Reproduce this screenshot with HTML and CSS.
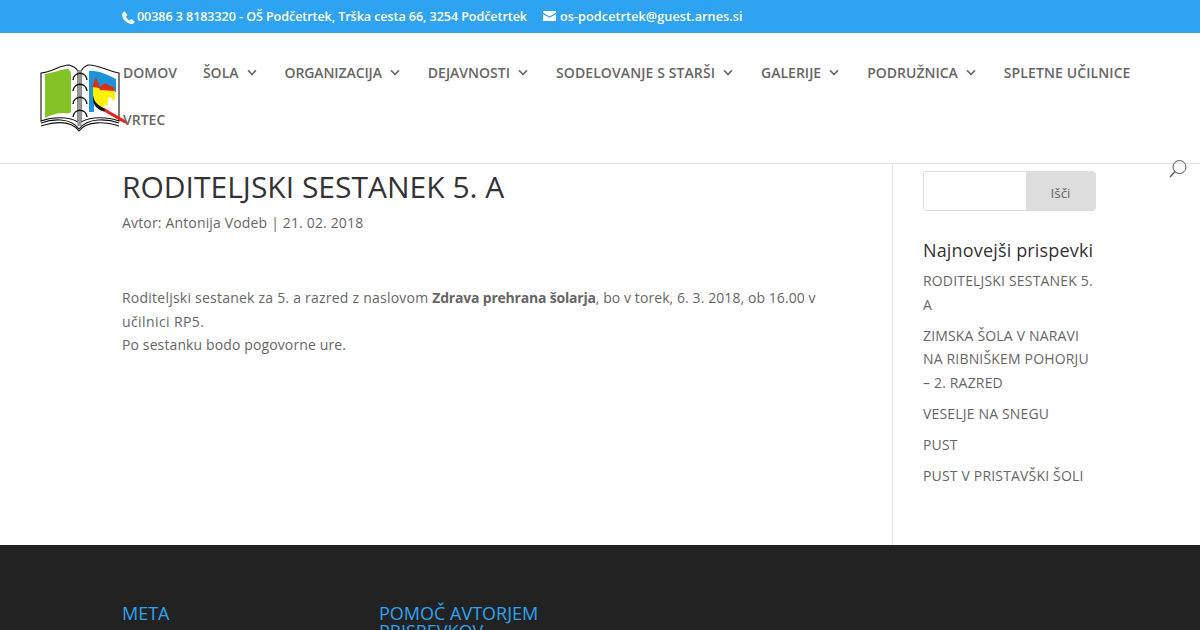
FILE: index.html
```html
<!DOCTYPE html>
<html lang="sl">
<head>
<meta charset="utf-8">
<title>Roditeljski sestanek 5. A</title>
<link rel="stylesheet" href="styles.css">
</head>
<body>
<div class="topbar">
  <div class="topbar-in">
    <span class="contact phone"><svg class="ico-phone" viewBox="0 0 13 13"><path d="M3 .8 5 3.500c.3.400.2.900-.1 1.200l-1 1c.7 1.500 2.200 3 3.700 3.700l1-1c.3-.3.800-.4 1.200-.1l2.500 1.900c.4.300.4.700.1 1-.8 1-1.700 2-2.900 1.800C5 12.700.4 8 .1 4.200 0 3 1 1.600 1.900.8c.4-.3.800-.3 1.100 0z" fill="#fff"/></svg>00386 3 8183320 - OŠ Podčetrtek, Trška cesta 66, 3254 Podčetrtek</span>
    <span class="contact mail"><svg class="ico-mail" viewBox="0 0 13 10"><path d="M0 0h13v1.800L6.500 5.400 0 1.800z" fill="#fff"/><path d="M0 3.200 6.500 6.800 13 3.200V10H0z" fill="#fff"/></svg>os-podcetrtek@guest.arnes.si</span>
  </div>
</div>
<header class="header">
  <svg class="logo" viewBox="0 0 90 70">
    <path d="M1 9 C12 8 20 1 29 1 C33 2 36 4 38 7 L38 58 C28 52 12 53 1 57 Z" fill="#fff" stroke="#111" stroke-width="1.100"/>
    <path d="M79 9 C70 8 56 0 48 1 C45 2 43 4 41 7 L41 58 C52 52 68 53 79 57 Z" fill="#fff" stroke="#111" stroke-width="1.100"/>
    <path d="M5 10 C13 9 21 5 28 5 C30 6 31 8 31 11 L31 48 C30 49 28 50 24 49 C17 49 10 51 5 54 Z" fill="#84c225"/>
    <path d="M49 7 C57 6 68 11 76 15 L76 28 L54 28 L54 48 L49 48 Z" fill="#1d94d9"/>
    <path d="M53 23 L60 23 L60 25 L75 26 L75 36 L72 36 L71 33 L68 34 L68 41 L64 41 L62 46 L57 40 L53 34 Z" fill="#fff200"/>
    <path d="M52 23 L56 13 L60 23 L62 21 L66 19 L70 22 L74 23 L75 27 L60 26 L59 24 Z" fill="#d9301c"/>
    <path d="M53 31 C54 38 58 42 66 45 L67 48 C58 47 52 42 53 31 Z" fill="#111"/>
    <path d="M64 44 L85 56 L89 60 L84 59 L65 48 Z" fill="#e0251b"/>
    <path d="M39.500 6 V62" stroke="#999" stroke-width="4"/>
    <g fill="none" stroke="#111" stroke-width="1.400"><path d="M33 16 C34 7 46 7 47 16"/><path d="M33 27 C34 18 46 18 47 27"/><path d="M33 40 C34 31 46 31 47 40"/><path d="M33 53 C34 44 46 44 47 53"/></g>
    <g fill="none" stroke="#111" stroke-width="1.100"><path d="M1 59 C12 55 30 53 39 65 C48 53 68 55 79 59"/><path d="M1 62 C14 58 31 56 39 67 C47 56 66 58 79 62"/></g>
  </svg>
  <nav class="nav">
    <ul class="menu">
      <li><a>DOMOV</a></li>
      <li class="sub"><a>ŠOLA</a></li>
      <li class="sub"><a class="tight">ORGANIZACIJA</a></li>
      <li class="sub"><a>DEJAVNOSTI</a></li>
      <li class="sub"><a class="wide">SODELOVANJE S STARŠI</a></li>
      <li class="sub"><a>GALERIJE</a></li>
      <li class="sub"><a>PODRUŽNICA</a></li>
      <li><a class="wide">SPLETNE UČILNICE</a></li>
      <li><a>VRTEC</a></li>
    </ul>
  </nav>
  <svg class="search-ico" viewBox="0 0 18 18"><circle cx="10.500" cy="7" r="6.500" fill="none" stroke="#555" stroke-width="1"/><path d="M6 11.500 1 17" stroke="#555" stroke-width="1.300" fill="none"/></svg>
</header>
<div class="main">
  <div class="wrap">
    <article class="post">
      <h1>RODITELJSKI SESTANEK 5. A</h1>
      <p class="meta">Avtor: Antonija Vodeb | 21. 02. 2018</p>
      <p class="body"><span class="lead">Roditeljski sestanek za 5. a razred z naslovom </span><strong>Zdrava prehrana šolarja</strong><span class="date">, bo v torek, 6. 3. 2018, ob 16.00 v </span><span class="room">učilnici RP5.</span><br>Po sestanku bodo pogovorne ure.</p>
    </article>
    <aside class="side">
      <form class="search"><span class="search-input"></span><span class="search-btn">Išči</span></form>
      <h4>Najnovejši prispevki</h4>
      <ul class="recent">
        <li>RODITELJSKI SESTANEK 5. A</li>
        <li>ZIMSKA ŠOLA V NARAVI NA RIBNIŠKEM POHORJU – 2. RAZRED</li>
        <li>VESELJE NA SNEGU</li>
        <li>PUST</li>
        <li>PUST V PRISTAVŠKI ŠOLI</li>
      </ul>
    </aside>
  </div>
</div>
<footer class="footer">
  <div class="foot-in">
    <h4 class="foot-col first">META</h4>
    <h4 class="foot-col">POMOČ AVTORJEM PRISPEVKOV</h4>
  </div>
</footer>
</body>
</html>
```
FILE: styles.css
```css
* { box-sizing: border-box; }
html, body { margin: 0; padding: 0; }
body { width: 1200px; height: 630px; overflow: hidden; background: #fff; font-family: "Open Sans", sans-serif; font-size: 14px; color: #666; }
.topbar { height: 33px; background: #2ea3f2; color: #fff; font-size: 12.600px; font-weight: 600; }
.topbar-in { display: flex; padding: 8px 0 0 122px; line-height: 18px; }
.contact { display: flex; align-items: center; white-space: nowrap; }
.phone { margin-right: 16px; letter-spacing: -.09px; }
.mail { letter-spacing: .1px; }
.ico-phone { width: 13px; height: 13px; margin: 1px 2px 0 0; }
.ico-mail { width: 13px; height: 10px; margin: -3px 4px 0 0; }
.header { position: relative; height: 131px; background: #fff; border-bottom: 1px solid #e2e2e2; padding: 16px 0 0 123px; }
.logo { position: absolute; left: 40px; top: 31px; width: 90px; height: 70px; overflow: visible; }
.nav { position: relative; }
.menu { list-style: none; margin: 0; padding: 0; display: flex; flex-wrap: wrap; row-gap: 0; font-size: 14px; font-weight: 600; color: #666; line-height: 47px; }
.menu li { margin-right: 26px; white-space: nowrap; }
.menu .sub { margin-right: 29px; display: flex; align-items: center; }
.menu .sub::after { content: ""; width: 6px; height: 6px; margin: -3px 0 0 9px; border-right: 2px solid #666; border-bottom: 2px solid #666; transform: rotate(45deg) scale(.8); }
.tight { letter-spacing: -.1px; }
.wide { letter-spacing: .1px; }
.search-ico { position: absolute; left: 1169px; top: 127px; width: 18px; height: 18px; }
.main { height: 381px; }
.wrap { display: flex; width: 974px; height: 100%; margin-left: 122px; }
.post { width: 771px; padding-right: 40px; border-right: 1px solid #e2e2e2; }
h1 { margin: 0; padding-top: 4px; font-size: 30px; font-weight: 400; line-height: 38px; color: #333; }
.meta { margin: 5px 0 0; line-height: 24px; letter-spacing: .16px; }
.body { margin: 51px 0 0; line-height: 23.700px; letter-spacing: .12px; }
.lead { letter-spacing: .23px; }
.date { letter-spacing: .08px; }
.room { letter-spacing: .4px; }
.body strong { letter-spacing: -.2px; }
.side { flex: 1; padding-left: 30px; }
.search { display: flex; height: 40px; margin-top: 7px; border: 1px solid #ddd; border-radius: 3px; overflow: hidden; }
.search-input { flex: 1; background: #fff; }
.search-btn { width: 69px; background: #ddd; color: #666; font-size: 13.500px; line-height: 42px; text-align: center; }
.side h4 { margin: 28px 0 0; font-size: 18px; font-weight: 400; line-height: 23px; color: #333; letter-spacing: .16px; }
.recent { list-style: none; margin: 7px 0 0; padding: 0; line-height: 23.800px; letter-spacing: .17px; }
.recent li { margin-bottom: 7px; }
.footer { height: 85px; background: #222; overflow: hidden; }
.foot-in { display: flex; padding: 59px 0 0 122px; }
.foot-col { margin: 0; width: 257px; padding-right: 80px; font-size: 18px; font-weight: 400; line-height: 18px; color: #2ea3f2; }
```
